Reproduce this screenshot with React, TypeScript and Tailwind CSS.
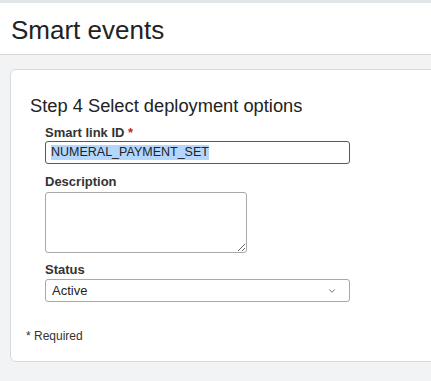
import { ChevronDown } from 'lucide-react';

export default function App() {
  return (
    <div
      className="h-[381px] w-full overflow-hidden bg-[#f2f3f4] text-[#222]"
      style={{ fontFamily: '"Liberation Sans", Arial, sans-serif' }}
    >
      <div className="h-[3px] bg-[#e1e6e9]" />
      <header className="h-[52px] border-b border-[#d6d6d6] bg-white px-[11px] pt-[12px]">
        <h1 className="text-[26px] leading-[30px] text-[#222]">Smart events</h1>
      </header>

      <div className="pl-[10px] pt-[14px]">
        <section className="h-[293px] w-[460px] rounded-[6px] border border-[#dadada] bg-white pl-[15px] pt-[25px]">
          <h2 className="ml-[4px] text-[18.3px] leading-[21px] text-[#222]">Step 4 Select deployment options</h2>

          <div className="ml-[19px]">
            <label className="mt-[9px] block text-[13px] font-bold leading-[16px] text-[#333]">
              Smart link ID <span className="text-[#c22]">*</span>
            </label>
            <div className="flex h-[23px] w-[305px] items-center rounded-[3px] border border-[#3d6a48] px-[5px]">
              <span className="bg-[#b3d6fd] text-[12.5px] leading-[15px] text-[#222]">NUMERAL_PAYMENT_SET</span>
            </div>

            <label className="mt-[10px] block text-[13px] font-bold leading-[16px] text-[#333]">Description</label>
            <textarea className="mt-[2px] block h-[61px] w-[202px] rounded-[3px] border border-[#a9a9a9] bg-white" />

            <label className="mt-[9px] block text-[13px] font-bold leading-[16px] text-[#333]">Status</label>
            <div className="mt-[1px] flex h-[23px] w-[305px] items-center justify-between rounded-[3px] border border-[#a9a9a9] pl-[6px] pr-[12px]">
              <span className="text-[13px] leading-[15px] text-[#222]">Active</span>
              <ChevronDown size={10} strokeWidth={2} className="text-[#555]" />
            </div>
          </div>

          <p className="mt-[27px] text-[12px] leading-[14px] text-[#333]">* Required</p>
        </section>
      </div>
    </div>
  );
}
